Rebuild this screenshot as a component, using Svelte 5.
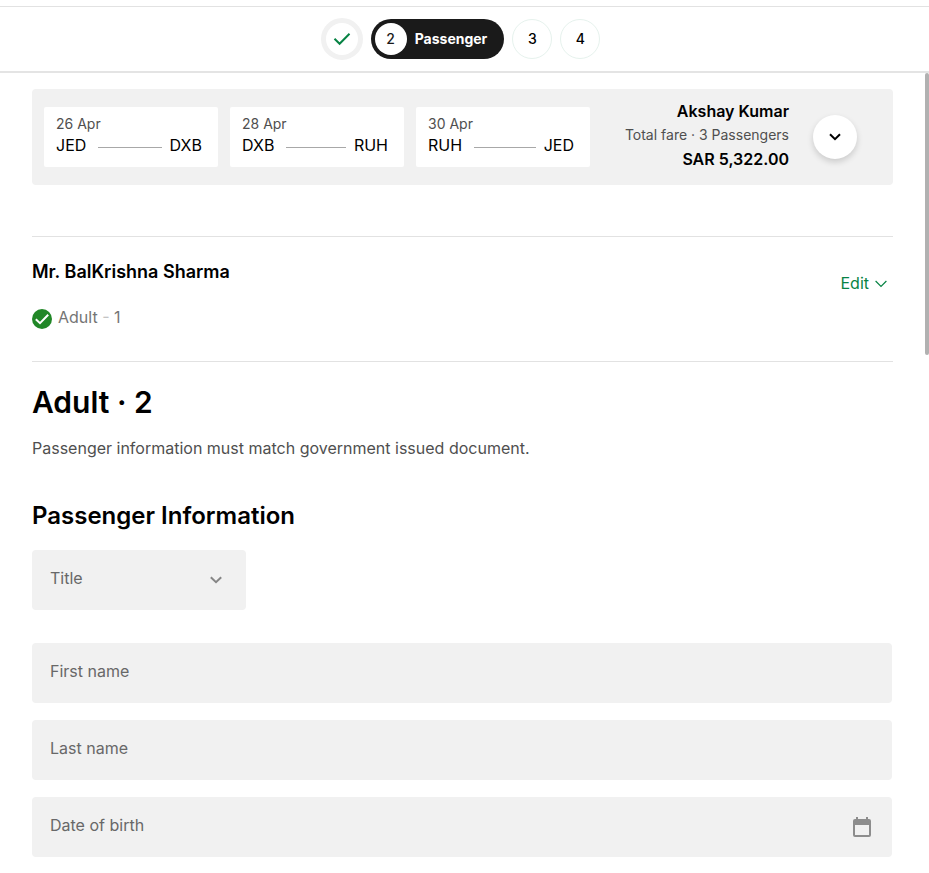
<script>
  const flights = [
    { date: '26 Apr', from: 'JED', to: 'DXB' },
    { date: '28 Apr', from: 'DXB', to: 'RUH' },
    { date: '30 Apr', from: 'RUH', to: 'JED' }
  ];
  let title = $state('');
  let firstName = $state('');
  let lastName = $state('');
  let birthDate = $state('');
</script>

<div class="page">
  <header>
    <ol class="steps">
      <li class="step done" aria-label="Step 1 complete">
        <svg viewBox="0 0 18 14" width="18" height="14" aria-hidden="true">
          <path d="M1.5 6.8 6.6 11.8 16.5 1.8" fill="none" stroke="#078344" stroke-width="2" />
        </svg>
      </li>
      <li class="current" aria-current="step">
        <span class="number">2</span>
        <span class="label">Passenger</span>
      </li>
      <li class="step">3</li>
      <li class="step">4</li>
    </ol>
  </header>

  <main>
    <section class="summary" aria-label="Trip summary">
      <div class="flights">
        {#each flights as flight}
          <div class="flight">
            <span class="date">{flight.date}</span>
            <div class="route">
              <span>{flight.from}</span>
              <i></i>
              <span>{flight.to}</span>
            </div>
          </div>
        {/each}
      </div>
      <div class="fare">
        <strong>Akshay Kumar</strong>
        <span>Total fare · 3 Passengers</span>
        <strong>SAR 5,322.00</strong>
      </div>
      <button class="expand" type="button" aria-label="Show trip details">
        <svg viewBox="0 0 12 8" width="12" height="8" aria-hidden="true">
          <path d="M1 1.2 6 6.2 11 1.2" fill="none" stroke="#000" stroke-width="2" />
        </svg>
      </button>
    </section>

    <section class="saved">
      <div>
        <h3>Mr. BalKrishna Sharma</h3>
        <p class="type">
          <svg viewBox="0 0 20 20" width="20" height="20" aria-hidden="true">
            <circle cx="10" cy="10" r="10" fill="#218727" />
            <path d="M3.8 10.2 8 14.2 16.2 5.8" fill="none" stroke="#fff" stroke-width="2" />
          </svg>
          <span>Adult <span class="dash">-</span> 1</span>
        </p>
      </div>
      <button class="edit" type="button">
        Edit
        <svg viewBox="0 0 12 10" width="12" height="10" aria-hidden="true">
          <path d="M.6 3 6 8.4 11.4 3" fill="none" stroke="#078344" stroke-width="1.2" />
        </svg>
      </button>
    </section>

    <h1>Adult · 2</h1>
    <p class="hint">Passenger information must match government issued document.</p>

    <form>
      <h2>Passenger Information</h2>
      <div class="field short">
        <select aria-label="Title" bind:value={title}>
          <option value="">Title</option>
          <option value="mr">Mr.</option>
          <option value="mrs">Mrs.</option>
          <option value="ms">Ms.</option>
        </select>
        <svg class="arrow" viewBox="0 0 12 8" width="12" height="8" aria-hidden="true">
          <path d="M.8 1.2 6 6.2 11.2 1.2" fill="none" stroke="#868686" stroke-width="2" />
        </svg>
      </div>
      <div class="field">
        <input type="text" aria-label="First name" placeholder="First name" bind:value={firstName} />
      </div>
      <div class="field">
        <input type="text" aria-label="Last name" placeholder="Last name" bind:value={lastName} />
      </div>
      <div class="field">
        <input type="text" aria-label="Date of birth" placeholder="Date of birth" bind:value={birthDate} />
        <svg class="calendar" viewBox="0 0 18 20" width="18" height="20" aria-hidden="true">
          <path d="M3 0h2v2h8V0h2v2h1a2 2 0 0 1 2 2v14a2 2 0 0 1-2 2H2a2 2 0 0 1-2-2V4a2 2 0 0 1 2-2h1zM2 8v10h14V8z" fill="#8d8d8d" />
        </svg>
      </div>
    </form>
  </main>
  <div class="scrollbar" aria-hidden="true"></div>
</div>

<style>
  :global(body) {
    background: #fff;
  }
  .page {
    position: relative;
    box-sizing: border-box;
    padding-top: 6px;
    font-family: Inter, 'Liberation Sans', sans-serif;
    font-size: 16px;
    line-height: 24px;
    color: #000;
  }
  h1, h2, h3, p, ol {
    margin: 0;
    padding: 0;
  }
  button, input, select {
    font: inherit;
  }
  button {
    border: 0;
    padding: 0;
    cursor: pointer;
  }
  svg {
    display: block;
    flex: none;
  }
  header {
    border-top: 1px solid #e2e2e2;
    border-bottom: 2px solid #e4e4e4;
    padding: 11px 8px 11px 0;
  }
  .steps {
    display: flex;
    justify-content: center;
    align-items: center;
    gap: 8px;
    list-style: none;
    font-size: 14px;
    font-weight: 500;
  }
  .step {
    box-sizing: border-box;
    display: flex;
    align-items: center;
    justify-content: center;
    width: 40px;
    height: 40px;
    border: 1px solid #e6f2ed;
    border-radius: 50%;
  }
  .step.done {
    width: 42px;
    height: 42px;
    border: 5px solid #f1f1f1;
  }
  .current {
    box-sizing: border-box;
    display: flex;
    align-items: center;
    gap: 8px;
    height: 40px;
    padding: 0 17px 0 4px;
    border-radius: 20px;
    background: #1a1a1a;
    color: #fff;
  }
  .current .number {
    width: 32px;
    line-height: 32px;
    border-radius: 50%;
    background: #fff;
    color: #1a1a1a;
    text-align: center;
  }
  .current .label {
    font-weight: 700;
  }
  main {
    padding: 16px 36px 16px 32px;
  }
  .summary {
    display: flex;
    align-items: center;
    padding: 10px 36px 10px 12px;
    border-radius: 4px;
    background: #f1f1f1;
  }
  .flights {
    display: flex;
    gap: 12px;
  }
  .flight {
    box-sizing: border-box;
    width: 174px;
    height: 60px;
    padding: 7px 16px 0 12px;
    border-radius: 2px;
    background: #fff;
  }
  .date {
    display: block;
    font-size: 14px;
    line-height: 20px;
    color: #4f4f4f;
  }
  .route {
    display: flex;
    align-items: center;
    line-height: 22px;
  }
  .route i {
    flex: 1;
    height: 1px;
    margin: 4px 8px 0 12px;
    background: #a8a8a8;
  }
  .fare {
    flex: 1;
    display: flex;
    flex-direction: column;
    padding-bottom: 4px;
    text-align: right;
    white-space: nowrap;
  }
  .fare strong {
    font-weight: 600;
  }
  .fare span {
    font-size: 14px;
    color: #4f4f4f;
  }
  .expand {
    display: flex;
    align-items: center;
    justify-content: center;
    width: 44px;
    height: 44px;
    margin-left: 24px;
    border-radius: 50%;
    background: #fff;
    box-shadow: 0 3px 6px rgba(0, 0, 0, 0.16);
  }
  .saved {
    display: flex;
    justify-content: space-between;
    margin-top: 51px;
    padding: 23px 6px 32px 0;
    border-top: 1px solid #e2e2e2;
    border-bottom: 1px solid #e2e2e2;
  }
  .saved h3 {
    font-size: 18px;
    font-weight: 600;
  }
  .type {
    display: flex;
    align-items: flex-end;
    gap: 6px;
    margin-top: 21px;
    color: #757575;
  }
  .dash {
    color: #c4c4c4;
  }
  .edit {
    display: flex;
    align-items: center;
    align-self: flex-start;
    gap: 6px;
    margin-top: 11px;
    background: none;
    color: #078344;
  }
  h1 {
    margin-top: 20px;
    font-size: 30px;
    line-height: 40px;
    font-weight: 600;
  }
  .hint {
    margin-top: 14px;
    color: #4f4f4f;
  }
  h2 {
    margin: 40px 0 18px;
    font-size: 24px;
    line-height: 32px;
    font-weight: 600;
  }
  .field {
    position: relative;
    margin: 0 1px 17px 0;
  }
  .field.short {
    width: 214px;
    margin-bottom: 33px;
  }
  input, select {
    display: block;
    box-sizing: border-box;
    width: 100%;
    height: 60px;
    padding: 0 18px 4px;
    border: 0;
    border-radius: 4px;
    background: #f1f1f1;
    color: #686868;
    appearance: none;
  }
  input::placeholder {
    color: #686868;
    opacity: 1;
  }
  .arrow, .calendar {
    position: absolute;
    pointer-events: none;
  }
  .arrow {
    top: 26px;
    right: 24px;
  }
  .calendar {
    top: 20px;
    right: 21px;
  }
  .scrollbar {
    position: absolute;
    top: 73px;
    right: 0;
    width: 4px;
    height: 282px;
    border-radius: 2px;
    background: #b1b1b1;
  }
</style>
